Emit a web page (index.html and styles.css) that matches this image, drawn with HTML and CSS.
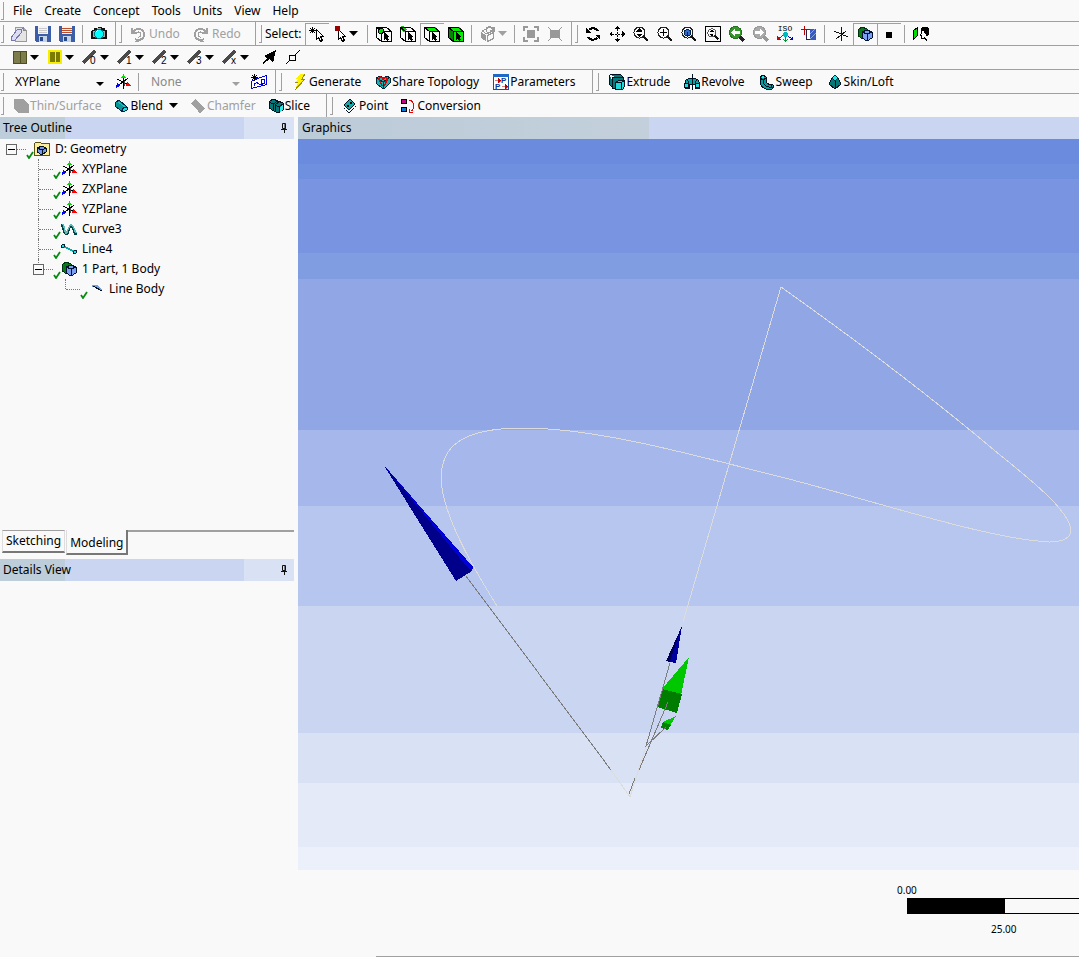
FILE: index.html
```html
<!DOCTYPE html>
<html lang="en">
<head>
    <meta charset="UTF-8">
    <meta name="viewport" content="width=device-width, initial-scale=1.0">
    <title>DesignModeler</title>
    <link rel="stylesheet" href="styles.css">
</head>
<body>
    <!-- shared icons -->
    <svg class="sprite" xmlns="http://www.w3.org/2000/svg">
        <symbol id="arrow" viewBox="0 0 9 5"><path d="M0 0h9L4.500 5z" fill="currentColor"/></symbol>
        <symbol id="new" viewBox="0 0 16 16">
            <path d="M5 1h7l3 3v11H4V8z" fill="#e4e4e4" stroke="#999"/>
            <path d="M12 1v3h3" fill="#aaa" stroke="#888"/>
            <path d="M0 12l6-8 5-1-1 4-6 7-3 1z" fill="#dcdcf2" stroke="#7777a8"/>
        </symbol>
        <symbol id="save" viewBox="0 0 16 16">
            <path d="M0 0h16v16H1l-1-1z" fill="#3c5ea8"/><path d="M3 0h10v8H3z" fill="#f4f4f4"/>
            <path d="M4 2h8M4 4h8M4 6h8" stroke="#c8c8c8"/><path d="M4 10h8v6H4z" fill="#c4d4e8"/><path d="M5 11h3v4H5z" fill="#27498c"/>
        </symbol>
        <symbol id="saveas" viewBox="0 0 16 16">
            <path d="M0 0h16v16H1l-1-1z" fill="#3c5ea8"/><path d="M3 0h10v8H3z" fill="#fff4e4"/>
            <path d="M3 2.500h10M3 4.500h10M3 6.500h10" stroke="#b85030"/><path d="M4 10h8v6H4z" fill="#c4d4e8"/><path d="M5 11h3v4H5z" fill="#27498c"/>
        </symbol>
        <symbol id="camera" viewBox="0 0 16 16">
            <path d="M1 4h2V2h3l1-1h3l1 1h3v2h1l1 1v8H0V5z" fill="#111"/><path d="M2 5h2v6H2zM12 5h2v6h-2zM6 2h4v2H6z" fill="#aaa"/>
            <circle cx="8" cy="8" r="4.500" fill="#00ffff" stroke="#007c84"/><path d="M5 6l2-2" stroke="#fff"/>
        </symbol>
        <symbol id="undo" viewBox="0 0 16 16">
            <path d="M2 2v5h5M3 6a6 5.500 0 1 1 2 7" fill="none" stroke="#a0a0a0" stroke-width="2"/><path d="M6 8a2.500 2.500 0 1 1 2 3M5 15h4" fill="none" stroke="#a0a0a0"/>
        </symbol>
        <symbol id="pick" viewBox="0 0 16 16">
            <path d="M3.500 1v6M0 4.500h7M1 2l5 5M6 2L1 7" stroke="#000"/><path d="M7.500 3.500v10l2-2 2 4 2-1-2-4h3z" fill="#fff" stroke="#000"/>
        </symbol>
        <symbol id="pickmode" viewBox="0 0 12 16">
            <path d="M3.500 3.500v10l2-2 2 4 2-1-2-4h3z" fill="#fff" stroke="#000"/><path d="M0 0h5v5H0z" fill="#900"/>
        </symbol>
        <symbol id="cube" viewBox="0 0 16 16">
            <path d="M.5 1.500h10l5 4v10h-10l-5-4zM.5 1.500l5 4h10M5.500 5.500v10" fill="none" stroke="#000"/>
        </symbol>
        <symbol id="cursor" viewBox="0 0 16 16"><path d="M8 6v8l2-2 1 3 2-1-1-3h2z" fill="#000"/></symbol>
        <symbol id="selpoint" viewBox="0 0 16 16"><use href="#cube"/><use href="#cursor"/><circle cx="5" cy="5" r="2.500" fill="#0d0" stroke="#000"/></symbol>
        <symbol id="seledge" viewBox="0 0 16 16"><path d="M1 1l5 4" stroke="#0c0" stroke-width="4"/><use href="#cube"/><use href="#cursor"/></symbol>
        <symbol id="selface" viewBox="0 0 16 16"><path d="M0 1h11l5 4H5z" fill="#0e0"/><use href="#cube"/><use href="#cursor"/></symbol>
        <symbol id="selbody" viewBox="0 0 16 16"><path d="M0 1h11l5 4v11H5l-5-4z" fill="#0e0"/><path d="M0 1l5 4v11l-5-4z" fill="#080"/><use href="#cube"/><use href="#cursor"/></symbol>
        <symbol id="graycube" viewBox="0 0 16 16">
            <path d="M1 6l5 3v6l-5-3z" fill="#999"/><path d="M7.500 9.500l6-3v6l-6 3zM2 5l4-2 1 3h4L7 8z" fill="none" stroke="#999"/><path d="M6 3c3-3 6-2 8 1M14 1v4h-4" fill="none" stroke="#999" stroke-width="2"/>
        </symbol>
        <symbol id="grow" viewBox="0 0 16 16"><path d="M4 4h8v8H4z" fill="#999"/><path d="M1 5V1h4M11 1h4v4M15 11v4h-4M5 15H1v-4" fill="none" stroke="#999" stroke-width="2"/></symbol>
        <symbol id="shrink" viewBox="0 0 16 16"><path d="M3 4h10v8H3z" fill="#999"/><path d="M1 1l14 14M15 1L1 15" stroke="#999"/></symbol>
        <symbol id="rotate" viewBox="0 0 16 16">
            <path d="M4 4c3-3 7-2 9 1M12 12c-3 3-7 2-9-1" fill="none" stroke="#000" stroke-width="2"/><path d="M1 2v5h5zM15 14V9h-5z"/>
        </symbol>
        <symbol id="pan" viewBox="0 0 16 16"><path d="M8 0l3 3H5zM8 16l3-3H5zM0 8l3-3v6zM16 8l-3-3v6z"/><path d="M8 3v10M3 8h10" stroke="#000" stroke-dasharray="2 1"/></symbol>
        <symbol id="lens" viewBox="0 0 16 16"><circle cx="6.500" cy="6.500" r="5.500" fill="#fafafa" stroke="#222"/><path d="M10.500 10.500l4.500 4.500" stroke="#111" stroke-width="2.500"/></symbol>
        <symbol id="zoom" viewBox="0 0 16 16"><use href="#lens"/><path d="M6.500 2l3 3.500h-6zM6.500 11l3-3.500h-6z"/></symbol>
        <symbol id="zoomin" viewBox="0 0 16 16"><use href="#lens"/><path d="M3 6.500h7M6.500 3v7" stroke="#000"/></symbol>
        <symbol id="zoomfit" viewBox="0 0 16 16"><use href="#lens"/><path d="M3.500 4.500l3-1 3 1v4l-3 2-3-2z" fill="#3568cc" stroke="#024"/><path d="M6.500 6v4" stroke="#024"/></symbol>
        <symbol id="magnify" viewBox="0 0 16 16"><path d="M.5.500h15v15H.5z" fill="none" stroke="#000"/><svg x="2" y="2" width="12" height="12"><use href="#zoom"/></svg></symbol>
        <symbol id="prev" viewBox="0 0 16 16"><path d="M10.500 10.500l4.500 4.500" stroke="#222" stroke-width="3"/><circle cx="6.500" cy="6.500" r="6" fill="#36962c" stroke="#267220"/><path d="M6 3L2 6.500 6 10V8h5V5H6z" fill="#fff"/></symbol>
        <symbol id="next" viewBox="0 0 16 16"><path d="M10.500 10.500l4.500 4.500" stroke="#999" stroke-width="3"/><circle cx="6.500" cy="6.500" r="6" fill="#aaa" stroke="#999"/><path d="M7 3l4 3.500L7 10V8H2V5h5z" fill="#fff"/></symbol>
        <symbol id="iso" viewBox="0 0 16 16">
            <path d="M8.500 9v6M6 13l2.500 2.500L11 13" stroke="#093" fill="none"/><path d="M7 9l-5 3" stroke="#d00"/><path d="M0 10v4h4z" fill="#c00"/><path d="M9 9l5 3" stroke="#00c"/><path d="M16 10v4h-4z" fill="#00c"/><circle cx="8.500" cy="8.500" r="2.500" fill="#0bb"/>
        </symbol>
        <symbol id="plane" viewBox="0 0 16 16"><path d="M5.500 3.500h9v10h-9z" fill="#fff" stroke="#224"/><path d="M9 3h6v11H9z" fill="#3858c0"/><path d="M9 8l5-5M9 13l6-6" stroke="#8ac"/><path d="M3.500 0v9M0 3.500h9" stroke="#b00"/></symbol>
        <symbol id="axes" viewBox="0 0 16 16"><path d="M8.500 1v14M1 5l14 6M3 13l10-8" stroke="#111"/></symbol>
        <symbol id="bodies" viewBox="0 0 16 16">
            <path d="M1 4l4-3 5 2v7l-4 3-5-3z" fill="#0a7a14" stroke="#031"/><path d="M5 6l5-2 5 2v6l-5 3-5-3z" fill="#7ba0f2" stroke="#013"/><path d="M5 6l5 2 5-2M10 8v7" fill="none" stroke="#013"/>
        </symbol>
        <symbol id="dot" viewBox="0 0 16 16"><circle cx="8" cy="9" r="3.500"/></symbol>
        <symbol id="look" viewBox="0 0 16 16">
            <path d="M.5 4.500l4-3v8l-4 4z" fill="#0d0" stroke="#000"/><path d="M8 2l2-1h4l2 2v6l-3 1-1-4-4-2z"/><path d="M8.500 4v3l-1 2h1v3h3M11 11l3 4M11.500 6v1" fill="none" stroke="#000"/>
        </symbol>
        <symbol id="frozen" viewBox="0 0 16 16"><path d="M1.500 2.500h13v12h-13z" fill="#7d7d4c" stroke="#4e4e20"/><path d="M8.500 2v12" stroke="#4e4e20"/></symbol>
        <symbol id="unfrozen" viewBox="0 0 16 16"><path d="M2 2h12v12H2z" fill="#7c7c00" stroke="#f6f000" stroke-width="2"/><path d="M8.500 2v12" stroke="#f6f000"/></symbol>
        <symbol id="slash" viewBox="0 0 16 16"><path d="M1 14L13 2" stroke="#4a4a4a" stroke-width="3"/></symbol>
        <symbol id="direction" viewBox="0 0 16 16"><path d="M15 1l-3 13-3-4-7 5-1-1 5-5-3-2z"/></symbol>
        <symbol id="vertex" viewBox="0 0 16 16"><path d="M4.500 6.500h6v5h-6zM1 15l3-3M10 6l5-5" fill="none" stroke="#000"/></symbol>
        <symbol id="triad" viewBox="0 0 16 16">
            <path d="M8.500 3v12M2 5l10 5M4 11l9-7" stroke="#000"/><path d="M9.500 7v5" stroke="#444"/><path d="M8.500 0L11 4H6z" fill="#0d0"/><path d="M12 8l4 4h-5z" fill="#f00"/><path d="M2 9l3 3-4 2z" fill="#00f"/>
        </symbol>
        <symbol id="sketch" viewBox="0 0 16 16">
            <path d="M3.500 5.500l12-4v9l-15 4v-7z" fill="#fff" stroke="#0000d8"/><path d="M10.500 5.500h3v4h-3zM3 12c1-5 4-3 5-2s3 2 5-1" fill="none" stroke="#0000d8"/><path d="M3.500 0v7M0 3.500h7M1 1l5 5M6 1L1 6" stroke="#000"/>
        </symbol>
        <symbol id="generate" viewBox="0 0 16 16"><path d="M8 0h5l-3 5h3L3 16l3-7H3l3-4H4z" fill="#fff200"/><path d="M13 0l-3 5h3L3 16l6-7M6 8H3" fill="none" stroke="#9a8c00"/></symbol>
        <symbol id="share" viewBox="0 0 16 16"><path d="M1 4l4-2 3 2 4-2 3 2v5l-5 5H7L2 10z" fill="#12b5b5" stroke="#023"/><path d="M2 4l6 4 6-4M8 8v6" stroke="#023" fill="none"/><path d="M4 5c0-3 3-2 4 0 1-2 5-2 4 1-1 2-2 5-3 6M4 5l3 7" fill="none" stroke="#d00" stroke-width="1.500"/></symbol>
        <symbol id="params" viewBox="0 0 16 16">
            <path d="M.5 1.500h15v14H.5z" fill="#fff" stroke="#1450a8"/><path d="M0 0h16v3H0z" fill="#2068c8"/>
            <path d="M2 6.500h4M5 4l2.500 2.500L5 9zM9 12.500h4M12 10l2.500 2.500L12 15z" stroke="#b00" stroke-width=".5" fill="#b00"/>
        </symbol>
        <symbol id="extrude" viewBox="0 0 16 16"><path d="M.5.500h11l2 2v4M.5.500v10l3 3h3" fill="#067878" stroke="#012"/><path d="M3.500 3.500h11v11h-11z" fill="#067878" stroke="#012"/><path d="M6.500 8.500l3-2h6v6l-2 3h-7z" fill="#20d8d8" stroke="#012"/><path d="M6.500 8.500h6v7M12.500 8.500l3-2" fill="none" stroke="#012"/></symbol>
        <symbol id="revolve" viewBox="0 0 16 16"><path d="M1 14V8c1-5 13-5 14 0v6h-4v-4H5v4z" fill="#08a4a4" stroke="#012"/><path d="M.5 9.500h4v4h-4zM11.500 9.500h4v4h-4z" fill="#20dede" stroke="#012"/><path d="M5 9L3 5M11 9l2-4M8.500 0v16" stroke="#012"/></symbol>
        <symbol id="sweep" viewBox="0 0 16 16"><path d="M1 3l3-2 3 2v4c1 3 3 4 6 3l2 2-2 3H7c-4-1-6-5-6-8z" fill="#089c9c" stroke="#012"/><path d="M1 4l3 2 3-2M4 6c0 5 4 8 9 7M12.500 10v4" fill="none" stroke="#012"/><path d="M3 2h2v2H3z" fill="#2ee"/></symbol>
        <symbol id="skin" viewBox="0 0 16 16"><path d="M8 1l3 3 3 6-6 5-6-5 3-6z" fill="#067878" stroke="#012"/><path d="M8 1l3 3-3 3-3-3z" fill="#20e8e8" stroke="#034"/><path d="M8.500 7v8" stroke="#012"/></symbol>
        <symbol id="thin" viewBox="0 0 16 16"><path d="M1 1h9l6 5v9H6l-5-4z" fill="#a0a0a0"/></symbol>
        <symbol id="blend" viewBox="0 0 16 16"><path d="M2 5l4-3 8 7v3l-4 2-7-5z" fill="#079696" stroke="#024"/><path d="M9 12l2-3 3 1v2l-4 2z" fill="#22dddd" stroke="#024"/><path d="M5 4l7 5" stroke="#3bb"/></symbol>
        <symbol id="chamfer" viewBox="0 0 16 16"><path d="M1 5l4-4 10 9-5 6-2-3z" fill="#a0a0a0"/></symbol>
        <symbol id="slice" viewBox="0 0 16 16"><path d="M1 4l4-3 5 2 5 2v7l-5 3-4-2-5-3z" fill="#067878" stroke="#012"/><path d="M1 4l4 2 5-3M5.500 6v7M7 7l4-3M7 7l4 2 4-3M11.500 9v6M7.500 7v6" fill="none" stroke="#012"/><path d="M12 9l3-2v5l-3 2z" fill="#2ee"/></symbol>
        <symbol id="point" viewBox="0 0 16 16"><path d="M2 7l6-6 5 5-6 6z" fill="#18a8a8" stroke="#012"/><path d="M2 10l5 5 7-7" fill="none" stroke="#012" stroke-dasharray="2 1"/><circle cx="9" cy="5" r="1"/><circle cx="6" cy="8" r="1"/></symbol>
        <symbol id="convert" viewBox="0 0 16 16"><path d="M1.500 1.500h5v4h-5z" fill="#c00880" stroke="#000"/><path d="M1.500 9.500h5v4h-5z" fill="#0878d0" stroke="#000"/><path d="M9 2c6 1 6 9 2 11M9.500 15v-4M9 14.500h4" fill="none" stroke="#e00"/></symbol>
        <symbol id="geometry" viewBox="0 0 16 16"><path d="M.5 2.500l1-1h5l1 1h8v12H.5z" fill="#fbee9c" stroke="#5b5410"/><path d="M3 7l5-2 4 2v4l-4 3-5-3z" fill="#7898ec" stroke="#012"/><path d="M3 7l5 2 4-2M8.500 9v5" fill="none" stroke="#012"/></symbol>
        <symbol id="curve" viewBox="0 0 16 16"><path d="M1 3c1 3 2 9 4 10S8 5 10 5s2 4 5 9" fill="none" stroke="#044" stroke-width="2.500"/><path d="M2 3c1 3 2 8 3 9S8 4 10 4s3 4 5 8" fill="none" stroke="#5cb8b8" stroke-width="1.500"/></symbol>
        <symbol id="line" viewBox="0 0 16 16"><path d="M2 5l12 6" stroke="#0aa" stroke-width="2"/><circle cx="2" cy="5" r="1.500" fill="#0ee" stroke="#023"/><circle cx="14" cy="11" r="1.500" fill="#0ee" stroke="#023"/></symbol>
        <symbol id="linebody" viewBox="0 0 16 16"><path d="M4 5h5l5 5" fill="none" stroke="#78a0dc" stroke-width="1.500"/><path d="M5 5l9 5" stroke="#012"/></symbol>
        <symbol id="check" viewBox="0 0 8 8"><path d="M1 4l2 3 4-6" fill="none" stroke="#088a12" stroke-width="1.800"/></symbol>
        <symbol id="pin" viewBox="0 0 8 10"><path d="M2.500.500h3v5h-3zM1 6.500h6M4.500 6v4" fill="none" stroke="#111"/><path d="M5 1v5" stroke="#111"/></symbol>
    </svg>

    <header>
        <nav class="toolbar menu">
            <i class="grip"></i>
            <button>File</button>
            <button>Create</button>
            <button>Concept</button>
            <button>Tools</button>
            <button>Units</button>
            <button>View</button>
            <button>Help</button>
        </nav>

        <div class="toolbar">
            <div class="group">
                <i class="grip"></i>
                <button class="tool" aria-label="New"><svg class="icon"><use href="#new"/></svg></button>
                <button class="tool" aria-label="Save"><svg class="icon"><use href="#save"/></svg></button>
                <button class="tool" aria-label="Save As"><svg class="icon"><use href="#saveas"/></svg></button>
                <i class="sep"></i>
                <button class="tool" aria-label="Capture"><svg class="icon"><use href="#camera"/></svg></button>
            </div>
            <div class="group history">
                <i class="grip"></i>
                <button class="cmd" disabled><svg class="icon"><use href="#undo"/></svg>Undo</button>
                <button class="cmd" disabled><svg class="icon flip"><use href="#undo"/></svg>Redo</button>
            </div>
            <div class="group">
                <i class="grip"></i>
                <span class="caption">Select:</span>
                <button class="tool pressed" aria-label="New Selection"><svg class="icon"><use href="#pick"/></svg></button>
                <button class="tool drop" aria-label="Select Mode"><svg class="icon slim"><use href="#pickmode"/></svg><svg class="arrow"><use href="#arrow"/></svg></button>
                <i class="sep"></i>
                <button class="tool" aria-label="Points"><svg class="icon"><use href="#selpoint"/></svg></button>
                <button class="tool" aria-label="Edges"><svg class="icon"><use href="#seledge"/></svg></button>
                <button class="tool pressed" aria-label="Faces"><svg class="icon"><use href="#selface"/></svg></button>
                <button class="tool" aria-label="Bodies"><svg class="icon"><use href="#selbody"/></svg></button>
                <i class="sep"></i>
                <button class="tool drop" aria-label="Extend" disabled><svg class="icon"><use href="#graycube"/></svg><svg class="arrow"><use href="#arrow"/></svg></button>
                <i class="sep"></i>
                <button class="tool" aria-label="Expand" disabled><svg class="icon"><use href="#grow"/></svg></button>
                <button class="tool" aria-label="Shrink" disabled><svg class="icon"><use href="#shrink"/></svg></button>
            </div>
            <div class="group last">
                <i class="grip"></i>
                <button class="tool" aria-label="Rotate"><svg class="icon"><use href="#rotate"/></svg></button>
                <button class="tool" aria-label="Pan"><svg class="icon"><use href="#pan"/></svg></button>
                <button class="tool" aria-label="Zoom"><svg class="icon"><use href="#zoom"/></svg></button>
                <button class="tool" aria-label="Box Zoom"><svg class="icon"><use href="#zoomin"/></svg></button>
                <button class="tool" aria-label="Zoom to Fit"><svg class="icon"><use href="#zoomfit"/></svg></button>
                <button class="tool" aria-label="Magnifier"><svg class="icon"><use href="#magnify"/></svg></button>
                <button class="tool" aria-label="Previous View"><svg class="icon"><use href="#prev"/></svg></button>
                <button class="tool" aria-label="Next View" disabled><svg class="icon"><use href="#next"/></svg></button>
                <button class="tool" aria-label="Isometric View"><svg class="icon"><use href="#iso"/><text x="8" y="5" class="iso">ISO</text></svg></button>
                <button class="tool" aria-label="New Plane View"><svg class="icon"><use href="#plane"/></svg></button>
                <i class="sep"></i>
                <button class="tool" aria-label="Display Plane"><svg class="icon"><use href="#axes"/></svg></button>
                <button class="tool pressed" aria-label="Display Model"><svg class="icon"><use href="#bodies"/></svg></button>
                <button class="tool pressed" aria-label="Display Points"><svg class="icon"><use href="#dot"/></svg></button>
                <i class="sep"></i>
                <button class="tool" aria-label="Look At Face"><svg class="icon"><use href="#look"/></svg></button>
            </div>
        </div>

        <div class="toolbar edges">
            <button class="tool drop" aria-label="Frozen"><svg class="icon"><use href="#frozen"/></svg><svg class="arrow"><use href="#arrow"/></svg></button>
            <button class="tool drop" aria-label="Unfrozen"><svg class="icon"><use href="#unfrozen"/></svg><svg class="arrow"><use href="#arrow"/></svg></button>
            <button class="tool drop" aria-label="Free edges"><svg class="icon"><use href="#slash"/><text x="8" y="15" class="digit">0</text></svg><svg class="arrow"><use href="#arrow"/></svg></button>
            <button class="tool drop" aria-label="Single edges"><svg class="icon"><use href="#slash"/><text x="9" y="15" class="digit">1</text></svg><svg class="arrow"><use href="#arrow"/></svg></button>
            <button class="tool drop" aria-label="Double edges"><svg class="icon"><use href="#slash"/><text x="9" y="15" class="digit">2</text></svg><svg class="arrow"><use href="#arrow"/></svg></button>
            <button class="tool drop" aria-label="Triple edges"><svg class="icon"><use href="#slash"/><text x="9" y="15" class="digit">3</text></svg><svg class="arrow"><use href="#arrow"/></svg></button>
            <button class="tool drop" aria-label="Multiple edges"><svg class="icon"><use href="#slash"/><text x="9" y="15" class="digit">x</text></svg><svg class="arrow"><use href="#arrow"/></svg></button>
            <button class="tool" aria-label="Edge direction"><svg class="icon"><use href="#direction"/></svg></button>
            <button class="tool" aria-label="Vertices"><svg class="icon"><use href="#vertex"/></svg></button>
        </div>

        <div class="toolbar features">
            <div class="group">
                <i class="grip"></i>
                <span class="picker"><select aria-label="Active plane"><option>XYPlane</option><option>ZXPlane</option><option>YZPlane</option></select></span>
                <button class="tool" aria-label="New Plane"><svg class="icon"><use href="#triad"/></svg></button>
                <i class="sep"></i>
                <span class="picker off"><select aria-label="Active sketch" disabled><option>None</option></select></span>
                <button class="tool" aria-label="New Sketch"><svg class="icon"><use href="#sketch"/></svg></button>
            </div>
            <div class="group wide">
                <i class="grip"></i>
                <button class="cmd"><svg class="icon"><use href="#generate"/></svg>Generate</button>
                <button class="cmd"><svg class="icon"><use href="#share"/></svg>Share Topology</button>
                <button class="cmd"><svg class="icon"><use href="#params"/><text x="8" y="9" class="p">P</text><text x="2" y="15" class="p">P</text></svg>Parameters</button>
            </div>
            <div class="group last">
                <i class="grip"></i>
                <button class="cmd"><svg class="icon"><use href="#extrude"/></svg>Extrude</button>
                <button class="cmd"><svg class="icon"><use href="#revolve"/></svg>Revolve</button>
                <button class="cmd"><svg class="icon"><use href="#sweep"/></svg>Sweep</button>
                <button class="cmd"><svg class="icon"><use href="#skin"/></svg>Skin/Loft</button>
            </div>
        </div>

        <div class="toolbar">
            <div class="group wide">
                <i class="grip"></i>
                <button class="cmd" disabled><svg class="icon"><use href="#thin"/></svg>Thin/Surface</button>
                <button class="cmd"><svg class="icon"><use href="#blend"/></svg>Blend<svg class="arrow"><use href="#arrow"/></svg></button>
                <button class="cmd" disabled><svg class="icon"><use href="#chamfer"/></svg>Chamfer</button>
                <button class="cmd"><svg class="icon"><use href="#slice"/></svg>Slice</button>
            </div>
            <div class="group last">
                <i class="grip"></i>
                <button class="cmd"><svg class="icon"><use href="#point"/></svg>Point</button>
                <button class="cmd"><svg class="icon"><use href="#convert"/></svg>Conversion</button>
            </div>
        </div>
    </header>

    <main>
        <aside>
            <h2 class="title">Tree Outline <button aria-label="Pin"><svg class="pin"><use href="#pin"/></svg></button></h2>
            <div class="outline">
                <div class="node root"><button class="twist" aria-label="Collapse"></button><i class="dots"></i><svg class="check"><use href="#check"/></svg><svg class="icon"><use href="#geometry"/></svg><span>D: Geometry</span></div>
                <ul>
                    <li><div class="node"><i class="dots"></i><svg class="check"><use href="#check"/></svg><svg class="icon"><use href="#triad"/></svg><span>XYPlane</span></div></li>
                    <li><div class="node"><i class="dots"></i><svg class="check"><use href="#check"/></svg><svg class="icon"><use href="#triad"/></svg><span>ZXPlane</span></div></li>
                    <li><div class="node"><i class="dots"></i><svg class="check"><use href="#check"/></svg><svg class="icon"><use href="#triad"/></svg><span>YZPlane</span></div></li>
                    <li><div class="node"><i class="dots"></i><svg class="check"><use href="#check"/></svg><svg class="icon"><use href="#curve"/></svg><span>Curve3</span></div></li>
                    <li><div class="node"><i class="dots"></i><svg class="check"><use href="#check"/></svg><svg class="icon"><use href="#line"/></svg><span>Line4</span></div></li>
                    <li>
                        <div class="node open"><button class="twist" aria-label="Collapse"></button><i class="dots"></i><svg class="check"><use href="#check"/></svg><svg class="icon"><use href="#bodies"/></svg><span>1 Part, 1 Body</span></div>
                        <ul>
                            <li><div class="node"><i class="dots"></i><svg class="check"><use href="#check"/></svg><svg class="icon"><use href="#linebody"/></svg><span>Line Body</span></div></li>
                        </ul>
                    </li>
                </ul>
            </div>
            <div class="tabs">
                <button>Sketching</button>
                <button class="active">Modeling</button>
            </div>
            <h2 class="title">Details View <button aria-label="Pin"><svg class="pin"><use href="#pin"/></svg></button></h2>
            <div class="details"></div>
        </aside>

        <section class="graphics">
            <h2 class="title">Graphics</h2>
            <div class="viewport">
                <svg class="scene" viewBox="298 139 781 818" preserveAspectRatio="none">
                    <!-- background bands -->
                    <rect x="298" y="139" width="781" height="25" fill="#6b8cde"/>
                    <rect x="298" y="164" width="781" height="15" fill="#6f8fdf"/>
                    <rect x="298" y="179" width="781" height="74" fill="#7995e1"/>
                    <rect x="298" y="253" width="781" height="26" fill="#819de1"/>
                    <rect x="298" y="279" width="781" height="151" fill="#91a7e5"/>
                    <rect x="298" y="430" width="781" height="76" fill="#a6b8eb"/>
                    <rect x="298" y="506" width="781" height="100" fill="#b6c6ee"/>
                    <rect x="298" y="606" width="781" height="127" fill="#cad5f1"/>
                    <rect x="298" y="733" width="781" height="50" fill="#d9e2f5"/>
                    <rect x="298" y="783" width="781" height="64" fill="#e4eaf8"/>
                    <rect x="298" y="847" width="781" height="23" fill="#ecf0fb"/>
                    <!-- spline and line -->
                    <g class="model">
                        <path d="M683 622L781 287C860 343 935 400 1000 455C1040 487 1069 512 1071 530C1071 543 1050 543 1038 541C980 536 870 500 785 478C700 457 600 428 523 428C450 428 441 455 441 480C443 510 462 550 497 606"/>
                        <path d="M611 770L630 797L646 746"/>
                    </g>
                    <!-- axis arrows -->
                    <path d="M383 464L473 567L472 571L456 581z" fill="#0000d8"/>
                    <path d="M383 464L468 568L471 571L456 581z" fill="#00008b"/>
                    <path d="M682 626L666 661L675 663z" fill="#000052"/>
                    <path d="M682 626L670 662L676 663z" fill="#0000a0"/>
                    <path d="M689 657L662 689L681 695z" fill="#00c800"/>
                    <path d="M662 689L682 694L677 713L657 707z" fill="#007d00"/>
                    <path d="M676 716L663 722L670 726z" fill="#00c800"/>
                    <path d="M663 722L671 725L668 730L661 728z" fill="#008200"/>
                    <g class="axis">
                        <path d="M466 576L611 770M670 663L646 746L666 727M668 702L639 770M635 778L629 794"/>
                    </g>
                </svg>
                <div class="ruler">
                    <span class="from">0.00</span>
                    <div class="bar"></div>
                    <span class="mid">25.00</span>
                </div>
            </div>
        </section>
    </main>
</body>
</html>
```
FILE: styles.css
```css
* {
    box-sizing: border-box;
}
body {
    margin: 0;
    min-height: 100vh;
    display: flex;
    flex-direction: column;
    background-color: #f9f9f9;
    color: #000;
    font-family: "Noto Sans", "Open Sans", sans-serif;
    font-size: 12px;
    line-height: 16px;
}
button, select {
    font: inherit;
    color: inherit;
    background: none;
    border: none;
    border-radius: 0;
    padding: 0;
    margin: 0;
    white-space: nowrap;
}
button:disabled {
    color: #a0a0a0;
}
ul {
    list-style: none;
    margin: 0;
    padding: 0;
}
svg {
    display: block;
    flex: none;
}
.sprite {
    position: absolute;
    width: 0;
    height: 0;
}
.icon {
    width: 16px;
    height: 16px;
    overflow: visible;
    shape-rendering: crispEdges;
}
.icon.slim {
    width: 12px;
}
.icon.flip {
    transform: scaleX(-1);
}
.arrow {
    width: 9px;
    height: 5px;
}
.icon text {
    font-family: "Liberation Sans", sans-serif;
    font-size: 10px;
}
.icon .iso {
    font-family: "Liberation Mono", monospace;
    font-size: 8px;
    text-anchor: middle;
}
.icon .p {
    font-size: 8px;
    font-weight: bold;
    fill: #0a3c98;
}

/* toolbars */
header {
    overflow: hidden;
}
.toolbar {
    display: flex;
    align-items: stretch;
    height: 24px;
    border-bottom: 1px solid #a0a0a0;
}
.toolbar:last-child {
    height: 23px;
    border-bottom: none;
}
.menu {
    height: 22px;
}
.menu button {
    padding: 0 6px;
}
.group {
    display: flex;
    align-items: center;
    padding-right: 4px;
    border-right: 1px solid #a0a0a0;
}
.group + .group {
    padding-left: 2px;
}
.group.wide {
    padding-right: 10px;
}
.group.last {
    border-right: none;
}
.grip {
    width: 3px;
    height: 18px;
    margin: 0 3px 0 1px;
    align-self: center;
    border-right: 1px solid #a0a0a0;
    border-bottom: 1px solid #a0a0a0;
}
.sep {
    width: 1px;
    height: 18px;
    margin: 0 4px 0 3px;
    background-color: #a0a0a0;
}
.tool {
    display: flex;
    align-items: center;
    justify-content: center;
    width: 24px;
    height: 22px;
}
.tool.drop {
    width: 35px;
    gap: 2px;
}
.tool.pressed {
    border-top: 1px solid #a0a0a0;
    border-left: 1px solid #a0a0a0;
}
.cmd {
    display: flex;
    align-items: center;
    padding: 0 6px;
    gap: 1px;
}
.cmd .arrow {
    margin-left: 5px;
}
.features .cmd {
    padding: 0 7px;
}
.history .cmd {
    min-width: 63px;
    padding: 0 5px;
    gap: 3px;
}
.caption {
    margin-right: 3px;
}
.edges {
    padding-left: 12px;
}
.edges .tool.drop {
    gap: 2px;
    justify-content: flex-start;
}
.picker {
    position: relative;
    width: 104px;
}
.picker select {
    width: 100%;
    padding-left: 8px;
    appearance: none;
    opacity: 1;
}
.picker::after {
    content: "";
    position: absolute;
    right: 7px;
    top: 8px;
    border: 4px solid transparent;
    border-top-color: #000;
    border-bottom: none;
    pointer-events: none;
}
.picker.off {
    color: #888;
}
.picker.off::after {
    border-top-color: #a0a0a0;
}

/* panels */
main {
    flex: 1;
    display: flex;
    gap: 4px;
}
aside {
    width: 294px;
    flex: none;
    display: flex;
    flex-direction: column;
}
.title {
    display: flex;
    align-items: center;
    justify-content: space-between;
    height: 22px;
    margin: 0;
    padding: 0 6px 0 3px;
    font-size: 12px;
    font-weight: normal;
    background: linear-gradient(to right, #bdcdd9 22%, #c9d5f1 22% 83%, #d9e2f5 83%);
}
.graphics .title {
    padding-left: 4px;
    background: linear-gradient(to right, #bccbd8, #c3d0dc 45%, #c9d5f1 45%);
}
.pin {
    width: 8px;
    height: 10px;
}
.outline {
    flex: 25;
    padding-left: 6px;
}
.node {
    display: flex;
    align-items: center;
    height: 20px;
}
.node span {
    margin-left: 5px;
}
.twist {
    width: 11px;
    height: 11px;
    border: 1px solid #666;
    background: linear-gradient(#000, #000) center / 7px 1px no-repeat;
}
.dots {
    width: 14px;
    border-top: 1px dotted #777;
}
.twist + .dots {
    width: 9px;
}
.check {
    width: 8px;
    height: 8px;
    align-self: flex-end;
}
.outline li {
    position: relative;
    margin-left: 33px;
}
.outline li li {
    margin-left: 27px;
}
.outline li::before {
    content: "";
    position: absolute;
    left: -1px;
    top: 0;
    height: 20px;
    border-left: 1px dotted #777;
}
.outline li:last-child::before {
    height: 10px;
}
.node.open {
    position: relative;
    margin-left: -6px;
}
.node.open .twist {
    background-color: #f9f9f9;
}
.tabs {
    display: flex;
    align-items: flex-start;
    height: 29px;
    padding-left: 2px;
}
.tabs::after {
    content: "";
    flex: 1;
    border-top: 2px solid #a0a0a0;
}
.tabs button {
    height: 23px;
    padding: 0 3px;
    border: 1px solid #ddd;
    border-top-color: #a0a0a0;
    border-bottom: 2px solid #777;
}
.tabs .active {
    height: 25px;
    padding: 3px 3px 0;
    margin-left: 1px;
    border-top: none;
    border-right: 2px solid #777;
}
.details {
    flex: 24;
}

/* 3D view */
.graphics {
    flex: 1;
    min-width: 0;
    display: flex;
    flex-direction: column;
}
.viewport {
    flex: 1;
    position: relative;
}
.scene {
    position: absolute;
    width: 100%;
    height: 100%;
    shape-rendering: crispEdges;
}
.model {
    fill: none;
    stroke: #dcdcdc;
}
.axis {
    fill: none;
    stroke: #7d7d7d;
}
.ruler {
    position: absolute;
    right: 0;
    bottom: 20px;
    width: 182px;
    font-size: 10px;
}
.ruler span {
    display: block;
}
.bar {
    height: 16px;
    margin-left: 10px;
    border: 1px solid #000;
    border-right: none;
    background: linear-gradient(to right, #000 57%, #f9f9f9 57%);
}
.mid {
    margin: 7px 0 0 94px;
}
.viewport::after {
    content: "";
    position: absolute;
    left: 10%;
    right: 0;
    bottom: 0;
    border-bottom: 1px solid #a0a0a0;
}
```
